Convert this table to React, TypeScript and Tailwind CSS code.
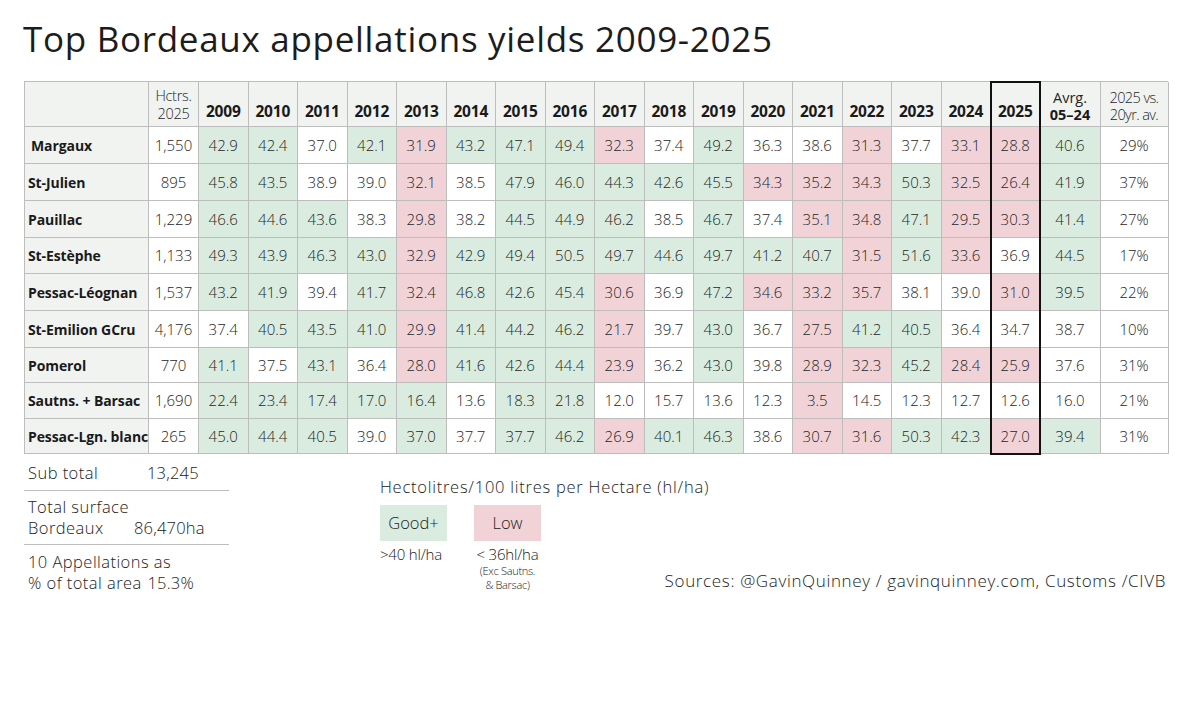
import React from "react";

type C = "g" | "p" | "w";
type Row = { label: string; hct: string; vals: [string, C][]; avg: [string, C]; pct: string; pad?: boolean };

const bg: Record<C, string> = {
  g: "bg-[#d9ecdf]",
  p: "bg-[#f1d3d7]",
  w: "bg-white",
};

const parse = (s: string): [string, C][] =>
  s.split(" ").map((t) => {
    const [v, c] = t.split(":");
    return [v, (c || "w") as C];
  });

const rows: Row[] = [
  { label: "Margaux", pad: true, hct: "1,550", vals: parse("42.9:g 42.4:g 37.0 42.1:g 31.9:p 43.2:g 47.1:g 49.4:g 32.3:p 37.4 49.2:g 36.3 38.6 31.3:p 37.7 33.1:p 28.8:p"), avg: ["40.6", "g"], pct: "29%" },
  { label: "St-Julien", hct: "895", vals: parse("45.8:g 43.5:g 38.9 39.0 32.1:p 38.5 47.9:g 46.0:g 44.3:g 42.6:g 45.5:g 34.3:p 35.2:p 34.3:p 50.3:g 32.5:p 26.4:p"), avg: ["41.9", "g"], pct: "37%" },
  { label: "Pauillac", hct: "1,229", vals: parse("46.6:g 44.6:g 43.6:g 38.3 29.8:p 38.2 44.5:g 44.9:g 46.2:g 38.5 46.7:g 37.4 35.1:p 34.8:p 47.1:g 29.5:p 30.3:p"), avg: ["41.4", "g"], pct: "27%" },
  { label: "St-Estèphe", hct: "1,133", vals: parse("49.3:g 43.9:g 46.3:g 43.0:g 32.9:p 42.9:g 49.4:g 50.5:g 49.7:g 44.6:g 49.7:g 41.2:g 40.7:g 31.5:p 51.6:g 33.6:p 36.9"), avg: ["44.5", "g"], pct: "17%" },
  { label: "Pessac-Léognan", hct: "1,537", vals: parse("43.2:g 41.9:g 39.4 41.7:g 32.4:p 46.8:g 42.6:g 45.4:g 30.6:p 36.9 47.2:g 34.6:p 33.2:p 35.7:p 38.1 39.0 31.0:p"), avg: ["39.5", "g"], pct: "22%" },
  { label: "St-Emilion GCru", hct: "4,176", vals: parse("37.4 40.5:g 43.5:g 41.0:g 29.9:p 41.4:g 44.2:g 46.2:g 21.7:p 39.7 43.0:g 36.7 27.5:p 41.2:g 40.5:g 36.4 34.7"), avg: ["38.7", "w"], pct: "10%" },
  { label: "Pomerol", hct: "770", vals: parse("41.1:g 37.5 43.1:g 36.4 28.0:p 41.6:g 42.6:g 44.4:g 23.9:p 36.2 43.0:g 39.8 28.9:p 32.3:p 45.2:g 28.4:p 25.9:p"), avg: ["37.6", "w"], pct: "31%" },
  { label: "Sautns. + Barsac", hct: "1,690", vals: parse("22.4:g 23.4:g 17.4:g 17.0:g 16.4:g 13.6 18.3:g 21.8:g 12.0 15.7 13.6 12.3 3.5:p 14.5 12.3 12.7 12.6"), avg: ["16.0", "w"], pct: "21%" },
  { label: "Pessac-Lgn. blanc", hct: "265", vals: parse("45.0:g 44.4:g 40.5:g 39.0 37.0:g 37.7 37.7:g 46.2:g 26.9:p 40.1:g 46.3:g 38.6 30.7:p 31.6:p 50.3:g 42.3:g 27.0:p"), avg: ["39.4", "g"], pct: "31%" },
];

const years = Array.from({ length: 17 }, (_, i) => String(2009 + i));

const cell = "border-r border-b border-[#bdbdbd] flex items-center justify-center";

export default function App() {
  return (
    <div className="w-[1200px] h-[710px] bg-white text-[#262626] font-['Open_Sans','Noto_Sans',sans-serif] overflow-hidden">
      <div className="pl-[23px] pt-[19px]">
        <h1 className="text-[35px] leading-[40px] text-[#1c1c1c] font-normal tracking-[0.7px] whitespace-nowrap">
          Top Bordeaux appellations yields 2009-2025
        </h1>
      </div>

      <div className="ml-[24px] mt-[22px] relative w-[1144px]">
        <div className="grid grid-cols-[124px_50px_repeat(17,49.5px)_60px_68px] grid-rows-[45px_37px_37px_37px_36px_37px_37px_35px_36px_35px] border-l border-t border-[#bdbdbd] text-[15px]">
          <div className={`${cell} bg-[#f1f3f1]`} />
          <div className={`${cell} bg-[#f1f3f1] flex-col !justify-end pb-[3px] leading-[18px] font-light text-[14.5px] tracking-[-0.3px]`}>
            <span>Hctrs.</span>
            <span>2025</span>
          </div>
          {years.map((y) => (
            <div key={y} className={`${cell} bg-[#f1f3f1] !items-end pb-[3px] font-bold text-[15.5px] tracking-[-0.2px] text-[#1a1a1a]`}>
              {y}
            </div>
          ))}
          <div className={`${cell} bg-[#f1f3f1] flex-col !justify-end pb-[3px] leading-[17px] text-[14.5px]`}>
            <span className="font-normal">Avrg.</span>
            <span className="font-bold text-[#1a1a1a]">05–24</span>
          </div>
          <div className={`${cell} bg-[#f1f3f1] flex-col !justify-end pb-[3px] leading-[17px] text-[14.5px] font-light tracking-[-0.6px]`}>
            <span>2025 vs.</span>
            <span>20yr. av.</span>
          </div>

          {rows.map((r) => (
            <React.Fragment key={r.label}>
              <div className={`${cell} !justify-start bg-[#f1f3f1] font-bold text-[14px] text-[#1a1a1a] ${r.pad ? "pl-[6px]" : "pl-[3px]"} whitespace-nowrap tracking-[-0.1px]`}>
                {r.label}
              </div>
              <div className={`${cell} bg-white font-light`}>{r.hct}</div>
              {r.vals.map(([v, c], i) => (
                <div key={i} className={`${cell} ${bg[c]} font-light`}>
                  {v}
                </div>
              ))}
              <div className={`${cell} ${bg[r.avg[1]]} font-light`}>{r.avg[0]}</div>
              <div className={`${cell} bg-white font-light`}>{r.pct}</div>
            </React.Fragment>
          ))}
        </div>
        <div className="absolute left-[965.5px] top-0 w-[51px] h-[374px] border-[2.5px] border-[#111] pointer-events-none" />
      </div>

      <div className="flex ml-[24px] mt-[3px] w-[1144px]">
        <div className="w-[205px] shrink-0 text-[16.5px] font-light leading-[21px] text-[#222] tracking-[0.45px]">
          <div className="flex h-[34px] items-center border-b border-[#bdbdbd] pl-[4px] pb-[3px]">
            <span className="w-[119px]">Sub total</span>
            <span className="tracking-[0.2px]">13,245</span>
          </div>
          <div className="border-b border-[#bdbdbd] pl-[4px] pt-[5px] pb-[6px]">
            <div>Total surface</div>
            <div className="flex">
              <span className="w-[106px]">Bordeaux</span>
              <span className="tracking-[0.2px]">86,470ha</span>
            </div>
          </div>
          <div className="pl-[4px] pt-[6px]">
            <div>10 Appellations as</div>
            <div>
              % of total area <span className="ml-[1px] tracking-[0.2px]">15.3%</span>
            </div>
          </div>
        </div>

        <div className="flex-1 ml-[151px] pt-[20px] text-[#222]">
          <div className="text-[16.5px] font-light leading-[20px] tracking-[0.75px] whitespace-nowrap">Hectolitres/100 litres per Hectare (hl/ha)</div>
          <div className="flex items-end mt-[8px]">
            <div className="flex gap-[27px] shrink-0">
              <div className="flex flex-col items-center w-[67px]">
                <div className="w-[67px] h-[36px] bg-[#d9ecdf] flex items-center justify-center text-[16.5px] font-light">Good+</div>
                <div className="text-[15px] font-light mt-[3px] leading-[20px] whitespace-nowrap self-start tracking-[-0.2px]">&gt;40 hl/ha</div>
              </div>
              <div className="flex flex-col items-center w-[67px]">
                <div className="w-[67px] h-[36px] bg-[#f1d3d7] flex items-center justify-center text-[16.5px] font-light">Low</div>
                <div className="text-[15px] font-light mt-[3px] leading-[20px] whitespace-nowrap tracking-[-0.2px]">&lt; 36hl/ha</div>
                <div className="text-[11px] font-light leading-[14px] text-center tracking-[-0.3px]">
                  (Exc Sautns.
                  <br />& Barsac)
                </div>
              </div>
            </div>
            <div className="flex-1 flex justify-end pb-[1px]">
              <div className="text-[17px] font-light leading-[20px] whitespace-nowrap pr-[2px] tracking-[0.65px]">
                Sources: @GavinQuinney / gavinquinney.com, Customs /CIVB
              </div>
            </div>
          </div>
        </div>
      </div>
    </div>
  );
}
